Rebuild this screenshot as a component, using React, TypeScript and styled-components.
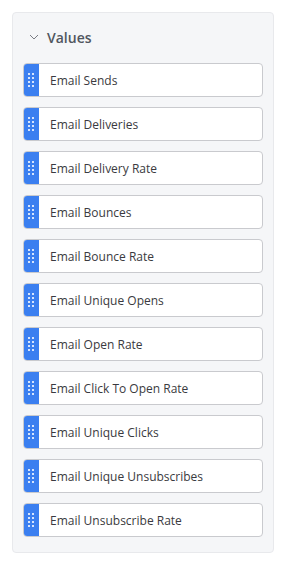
import styled, { createGlobalStyle } from "styled-components";

const GlobalStyle = createGlobalStyle`
  html, body {
    margin: 0;
    padding: 0;
    background: #ffffff;
  }
  body {
    font-family: "Open Sans", "Noto Sans", sans-serif;
  }
`;

const values = [
  "Email Sends",
  "Email Deliveries",
  "Email Delivery Rate",
  "Email Bounces",
  "Email Bounce Rate",
  "Email Unique Opens",
  "Email Open Rate",
  "Email Click To Open Rate",
  "Email Unique Clicks",
  "Email Unique Unsubscribes",
  "Email Unsubscribe Rate",
];

const Page = styled.div`
  padding: 12px 12px 0 12px;
`;

const Panel = styled.section`
  box-sizing: border-box;
  width: 262px;
  background: #f5f6f8;
  border: 1px solid #e8e9ec;
  border-radius: 4px;
  padding: 12px 10px 15px 10px;
`;

const Header = styled.div`
  display: flex;
  align-items: center;
  gap: 8px;
  height: 24px;
  padding-left: 6px;
  margin-bottom: 14px;
  color: #515660;
  font-size: 14px;
  font-weight: 600;
  cursor: default;
`;

const List = styled.div`
  display: flex;
  flex-direction: column;
  gap: 10px;
`;

const Row = styled.div`
  box-sizing: border-box;
  display: flex;
  align-items: stretch;
  height: 34px;
  background: #ffffff;
  border: 1px solid #c9cace;
  border-radius: 4px;
  overflow: hidden;
`;

const Handle = styled.div`
  flex-shrink: 0;
  width: 16px;
  margin: -1px 0 -1px -1px;
  background: #3b7ff0;
  border-radius: 4px 0 0 4px;
  display: flex;
  align-items: center;
  justify-content: center;
`;

const Label = styled.span`
  display: flex;
  align-items: center;
  padding-left: 11px;
  font-size: 12px;
  color: #3a3a40;
  white-space: nowrap;
`;

const Chevron = () => (
  <svg width="10" height="6" viewBox="0 0 10 6" fill="none">
    <polyline points="1,1 5,5 9,1" stroke="#7a7c84" strokeWidth="1" />
  </svg>
);

const Dots = () => (
  <svg width="6" height="14" viewBox="0 0 6 14">
    {[0, 4, 8, 12].map((y) =>
      [0, 4].map((x) => (
        <rect key={`${x}-${y}`} x={x} y={y} width="2" height="2" fill="#d6e4fc" />
      ))
    )}
  </svg>
);

export default function App() {
  return (
    <>
      <GlobalStyle />
      <Page>
        <Panel>
          <Header>
            <Chevron />
            <span>Values</span>
          </Header>
          <List>
            {values.map((v) => (
              <Row key={v}>
                <Handle>
                  <Dots />
                </Handle>
                <Label>{v}</Label>
              </Row>
            ))}
          </List>
        </Panel>
      </Page>
    </>
  );
}
